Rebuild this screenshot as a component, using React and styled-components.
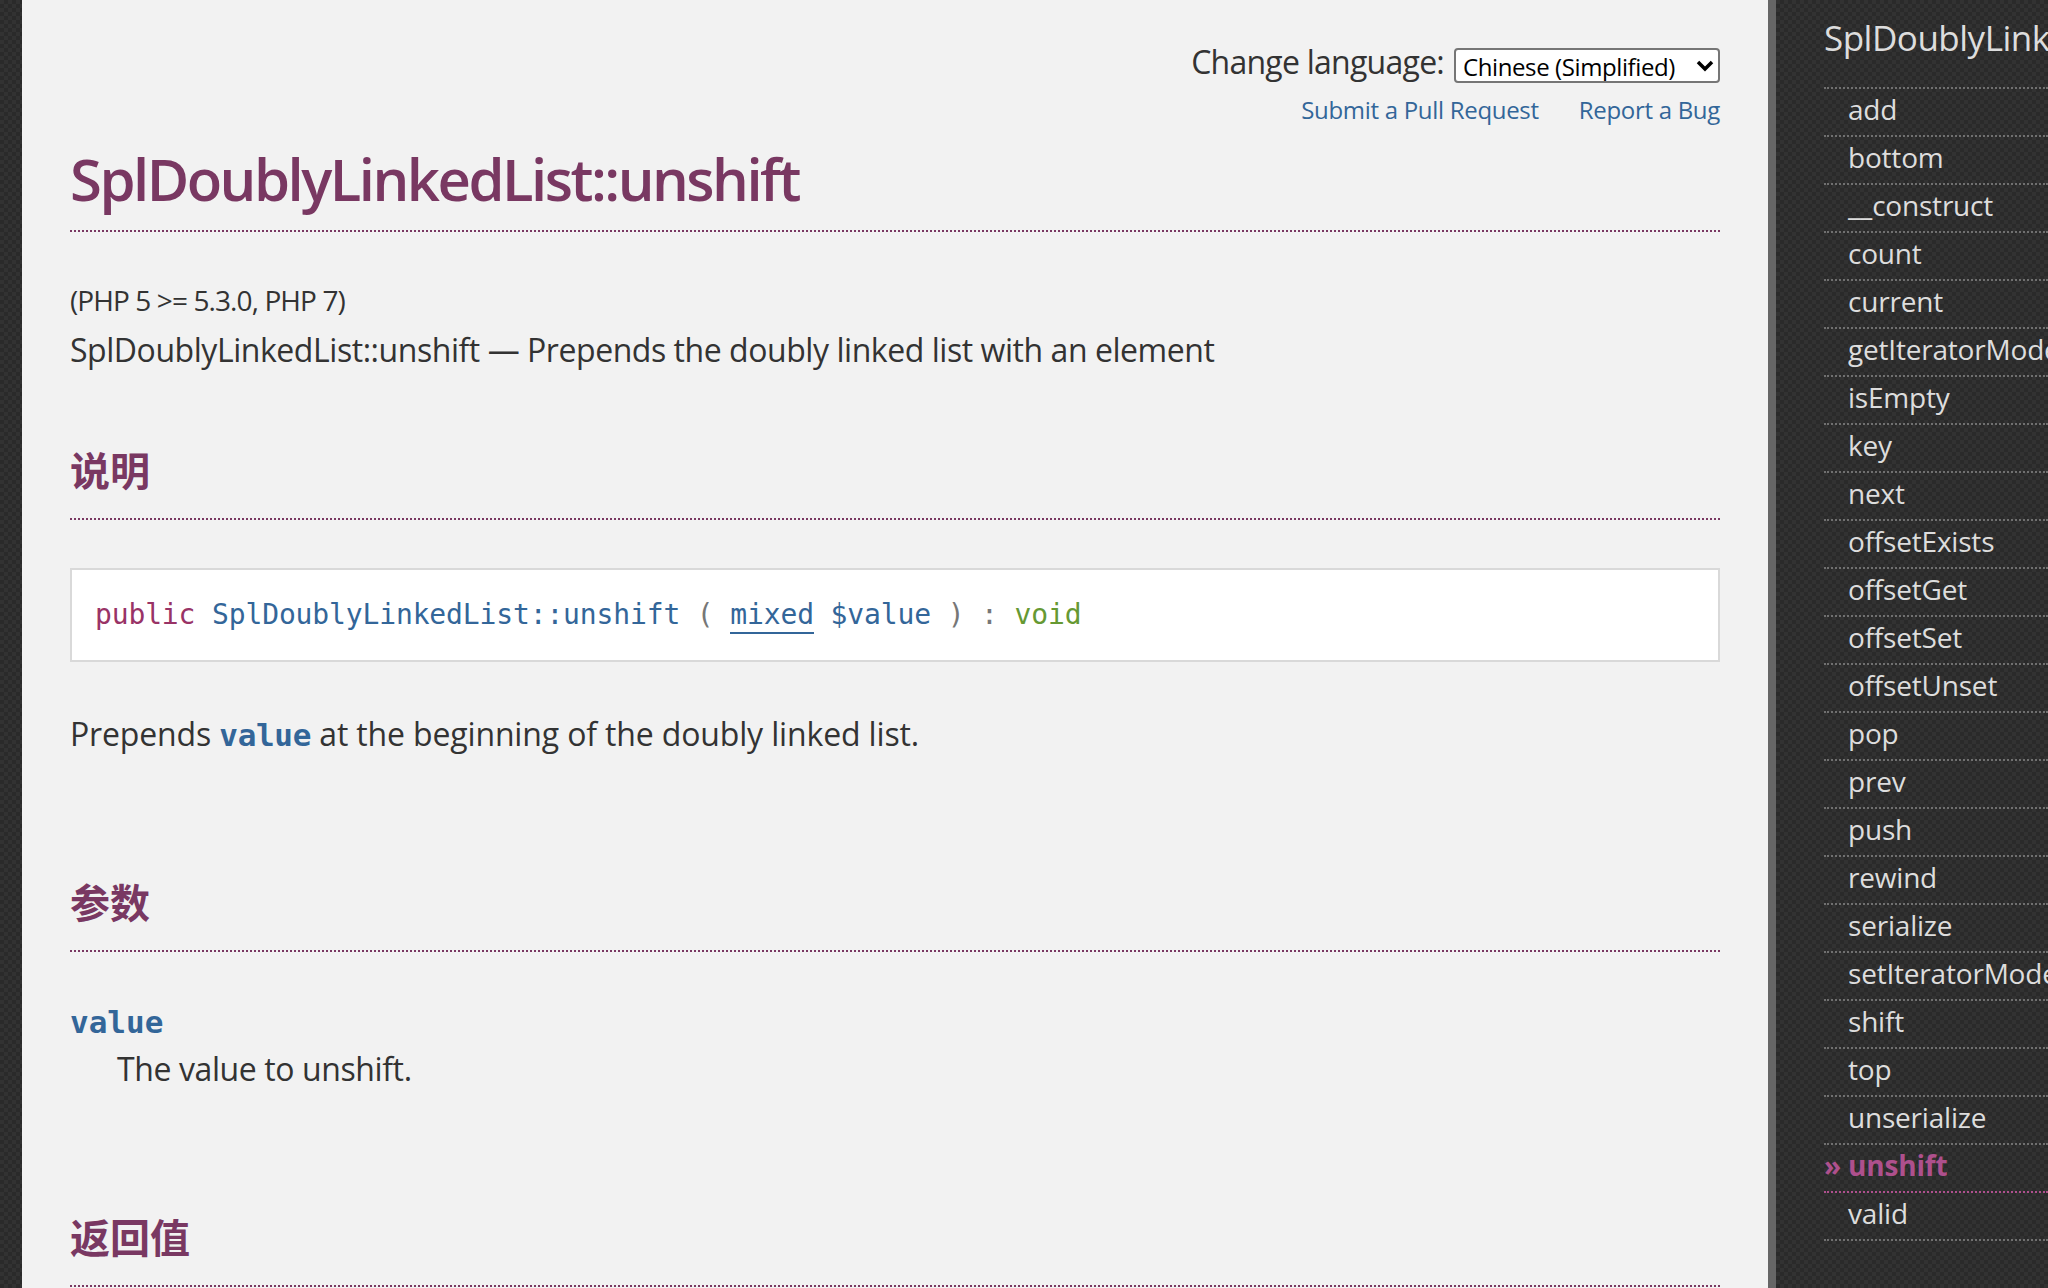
import React from 'react';
import styled, { createGlobalStyle } from 'styled-components';

const GlobalStyle = createGlobalStyle`
  html, body {
    margin: 0;
    padding: 0;
  }
  body {
    overflow: hidden;
    font-family: "Open Sans", "Noto Sans", sans-serif;
    color: #333;
  }
`;

const Layout = styled.div`
  display: flex;
  min-height: 100vh;
  padding-left: 22px;
  background-color: #323232;
  background-image:
    linear-gradient(45deg, #2a2a2a 25%, transparent 25%, transparent 75%, #2a2a2a 75%),
    linear-gradient(45deg, #2a2a2a 25%, transparent 25%, transparent 75%, #2a2a2a 75%);
  background-size: 8px 8px;
  background-position: 0 0, 4px 4px;
`;

const Main = styled.main`
  flex: none;
  width: 1746px;
  box-sizing: border-box;
  padding: 0 48px;
  background: #f2f2f2;
`;

const PageTools = styled.div`
  display: flex;
  flex-direction: column;
  align-items: flex-end;
  padding-top: 48px;
`;

const LangRow = styled.div`
  display: flex;
  align-items: center;
  gap: 10px;
  height: 35px;
`;

const LangLabel = styled.label`
  font-size: 32px;
  line-height: 35px;
  letter-spacing: -0.75px;
  margin-bottom: 8px;
  color: #333;
`;

const SelectWrap = styled.div`
  position: relative;
`;

const LangSelect = styled.select`
  appearance: none;
  box-sizing: border-box;
  width: 266px;
  height: 35px;
  padding: 0 32px 0 7px;
  border: 2px solid #767676;
  border-radius: 4px;
  background: #fff;
  color: #000;
  font-family: "Open Sans", sans-serif;
  font-size: 24px;
  letter-spacing: -0.4px;
`;

const Chevron = styled.svg`
  position: absolute;
  right: 5px;
  top: 12px;
  pointer-events: none;
`;

const ToolLinks = styled.div`
  display: flex;
  gap: 40px;
  margin-top: 9px;
`;

const ToolLink = styled.a`
  font-size: 24px;
  line-height: 36px;
  letter-spacing: -0.3px;
  color: #369;
  text-decoration: none;
`;

const Title = styled.h1`
  margin: 15px 0 0;
  padding-bottom: 15px;
  border-bottom: 2px dotted #793862;
  font-size: 58px;
  line-height: 72px;
  letter-spacing: -2.5px;
  font-weight: 600;
  color: #793862;
`;

const Version = styled.p`
  margin: 46px 0 0;
  font-size: 28px;
  line-height: 45px;
  letter-spacing: -0.9px;
`;

const Purpose = styled.p`
  margin: 3px 0 0;
  font-size: 32px;
  line-height: 48px;
  letter-spacing: -0.45px;
`;

const SectionTitle = styled.h2`
  margin: ${(p) => p.$gap}px 0 0;
  padding-bottom: 24px;
  border-bottom: 2px dotted #793862;
  font-family: "Noto Sans CJK SC", sans-serif;
  font-size: 40px;
  line-height: 50px;
  font-weight: 700;
  color: #793862;
`;

const Synopsis = styled.div`
  margin-top: 48px;
  box-sizing: border-box;
  height: 94px;
  padding: 24px 23px;
  border: 2px solid #d9d9d9;
  background: #fff;
  font-family: "DejaVu Sans Mono", "Liberation Mono", monospace;
  font-size: 28px;
  line-height: 42px;
  letter-spacing: -0.14px;
  white-space: pre;
`;

const Modifier = styled.span`
  color: #936;
`;

const MethodName = styled.span`
  color: #369;
`;

const Punct = styled.span`
  color: #777;
`;

const TypeLink = styled.a`
  color: #369;
  text-decoration: none;
  border-bottom: 2px solid #369;
  padding-bottom: 1px;
`;

const ReturnType = styled.span`
  color: #693;
`;

const Para = styled.p`
  margin: 48px 0 0;
  font-size: 32px;
  line-height: 48px;
  letter-spacing: -0.15px;
`;

const Param = styled.code`
  font-family: "DejaVu Sans Mono", "Liberation Mono", monospace;
  font-size: 31px;
  font-weight: 700;
  letter-spacing: -0.3px;
  color: #369;
`;

const ParamList = styled.dl`
  margin: 50px 0 0;
`;

const ParamTerm = styled.dt`
  font-family: "DejaVu Sans Mono", "Liberation Mono", monospace;
  font-size: 31px;
  line-height: 40px;
  font-weight: 700;
  color: #369;
`;

const ParamDesc = styled.dd`
  margin: 3px 0 0 47px;
  font-size: 32px;
  line-height: 48px;
  letter-spacing: -0.4px;
`;

const Sidebar = styled.aside`
  flex: 1;
  min-width: 0;
  overflow: hidden;
  border-left: 8px solid #666;
  padding: 16px 0 0 48px;
  white-space: nowrap;
`;

const SideTitle = styled.div`
  margin-bottom: 27px;
  font-size: 35px;
  line-height: 44px;
  letter-spacing: -0.5px;
  color: #ddd;
`;

const SideList = styled.ul`
  margin: 0;
  padding: 0;
  list-style: none;
  border-top: 2px dotted #707070;
`;

const SideItem = styled.li`
  padding: 2px 0 8px ${(p) => (p.$active ? 0 : 24)}px;
  border-bottom: 2px dotted ${(p) => (p.$active ? '#ae508d' : '#707070')};
  font-size: 28px;
  line-height: 36px;
  letter-spacing: -0.2px;
  font-weight: ${(p) => (p.$active ? 700 : 400)};
  color: ${(p) => (p.$active ? '#ae508d' : '#ddd')};
`;

const methods = [
  'add', 'bottom', '__construct', 'count', 'current', 'getIteratorMode',
  'isEmpty', 'key', 'next', 'offsetExists', 'offsetGet', 'offsetSet',
  'offsetUnset', 'pop', 'prev', 'push', 'rewind', 'serialize',
  'setIteratorMode', 'shift', 'top', 'unserialize', 'unshift', 'valid',
];

const App = () => (
  <>
    <GlobalStyle />
    <Layout>
      <Main>
        <PageTools>
          <LangRow>
            <LangLabel htmlFor="lang">Change language:</LangLabel>
            <SelectWrap>
              <LangSelect id="lang" defaultValue="zh">
                <option value="en">English</option>
                <option value="zh">Chinese (Simplified)</option>
              </LangSelect>
              <Chevron width="20" height="12" viewBox="0 0 20 12">
                <polyline points="3,2 10,9 17,2" fill="none" stroke="#000" strokeWidth="3.5" />
              </Chevron>
            </SelectWrap>
          </LangRow>
          <ToolLinks>
            <ToolLink href="#">Submit a Pull Request</ToolLink>
            <ToolLink href="#">Report a Bug</ToolLink>
          </ToolLinks>
        </PageTools>

        <Title>SplDoublyLinkedList::unshift</Title>
        <Version>(PHP 5 &gt;= 5.3.0, PHP 7)</Version>
        <Purpose>SplDoublyLinkedList::unshift — Prepends the doubly linked list with an element</Purpose>

        <SectionTitle $gap={70}>说明</SectionTitle>
        <Synopsis>
          <Modifier>public</Modifier> <MethodName>SplDoublyLinkedList::unshift</MethodName>{' '}
          <Punct>(</Punct> <TypeLink href="#">mixed</TypeLink> <MethodName>$value</MethodName>{' '}
          <Punct>)</Punct> <Punct>:</Punct> <ReturnType>void</ReturnType>
        </Synopsis>
        <Para>
          Prepends <Param>value</Param> at the beginning of the doubly linked list.
        </Para>

        <SectionTitle $gap={117}>参数</SectionTitle>
        <ParamList>
          <ParamTerm>value</ParamTerm>
          <ParamDesc>The value to unshift.</ParamDesc>
        </ParamList>

        <SectionTitle $gap={118}>返回值</SectionTitle>
      </Main>

      <Sidebar>
        <SideTitle>SplDoublyLinkedList</SideTitle>
        <SideList>
          {methods.map((m) => (
            <SideItem key={m} $active={m === 'unshift'}>
              {m === 'unshift' ? `» ${m}` : m}
            </SideItem>
          ))}
        </SideList>
      </Sidebar>
    </Layout>
  </>
);

export default App;
